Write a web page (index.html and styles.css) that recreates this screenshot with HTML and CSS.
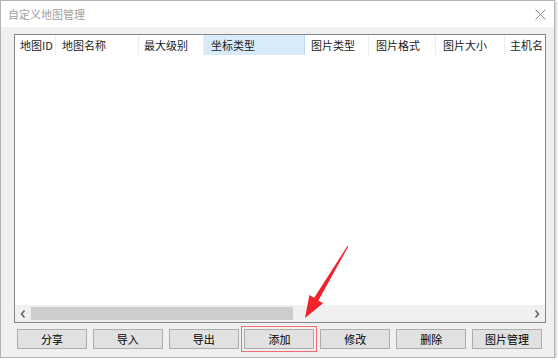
FILE: index.html
```html
<!DOCTYPE html>
<html>
<head>
    <title>自定义地图管理</title>
    <link rel="stylesheet" href="styles.css">
</head>
<body>
    <div class="window">
        <div class="titlebar">
            <span class="title">自定义地图管理</span>
            <svg class="close" width="11" height="11" viewBox="0 0 11 11">
                <path d="M0.5 0.5 L10.5 10.5 M10.5 0.5 L0.5 10.5" stroke="#8a8a8a" stroke-width="1" fill="none"/>
            </svg>
        </div>
        <div class="content">
            <div class="listview">
                <div class="header">
                    <div class="col c1">地图ID</div>
                    <div class="col c2">地图名称</div>
                    <div class="col c3">最大级别</div>
                    <div class="col c4 hover">坐标类型</div>
                    <div class="col c5">图片类型</div>
                    <div class="col c6">图片格式</div>
                    <div class="col c7">图片大小</div>
                    <div class="col c8">主机名</div>
                </div>
                <div class="rows"></div>
                <div class="hscroll">
                    <div class="arrow">
                        <svg width="6" height="8" viewBox="0 0 6 8"><path d="M4.5 0.5 L1.5 4 L4.5 7.5" stroke="#606060" stroke-width="1.5" fill="none"/></svg>
                    </div>
                    <div class="track">
                        <div class="thumb"></div>
                    </div>
                    <div class="arrow">
                        <svg width="6" height="8" viewBox="0 0 6 8"><path d="M1.5 0.5 L4.5 4 L1.5 7.5" stroke="#606060" stroke-width="1.5" fill="none"/></svg>
                    </div>
                </div>
            </div>
            <div class="buttons">
                <button>分享</button>
                <button>导入</button>
                <button>导出</button>
                <button class="marked">添加</button>
                <button>修改</button>
                <button>删除</button>
                <button>图片管理</button>
            </div>
        </div>
    </div>

    <!-- annotation arrow pointing at the add button -->
    <svg class="pointer" width="70" height="85" viewBox="0 0 70 85">
        <polygon points="58.4,5.3 28.4,59.4 33.1,62.2 15,77 19.4,54 24.2,56.8 57.6,4.7" fill="#f2222b"/>
    </svg>
</body>
</html>
```

FILE: styles.css
```css
body {
    margin: 0;
    padding: 0;
    background: #ffffff;
    font-family: "Noto Sans CJK SC", "Liberation Sans", sans-serif;
    font-size: 11px;
    color: #000;
}
.window {
    box-sizing: border-box;
    width: 555px;
    height: 358px;
    border: 1px solid #b4b4b4;
    box-shadow: 1px 1px 3px rgba(0, 0, 0, 0.25);
    display: flex;
    flex-direction: column;
    background: #f0f0f0;
}
.titlebar {
    height: 26px;
    background: #fff;
    display: flex;
    align-items: center;
    justify-content: space-between;
    padding: 0 8px 0 7px;
}
.title {
    color: #a0a0a0;
    font-size: 11px;
}
.close {
    margin-top: 1px;
}
.content {
    flex: 1;
    padding: 7px 8px 0 13px;
    display: flex;
    flex-direction: column;
}
.listview {
    box-sizing: border-box;
    height: 289px;
    border: 1px solid #828790;
    background: #fff;
    display: flex;
    flex-direction: column;
    overflow: hidden;
}
.header {
    display: flex;
    height: 20px;
    white-space: nowrap;
    color: #1a1a1a;
}
.col {
    flex: none;
    box-sizing: border-box;
    padding-left: 5px;
    line-height: 20px;
    border-right: 1px solid #ececec;
}
.c1 { width: 41px; }
.c2 { width: 83px; padding-left: 6px; }
.c3 { width: 65px; }
.c4 { width: 101px; padding-left: 7px; }
.c5 { width: 64px; padding-left: 6px; }
.c6 { width: 67px; padding-left: 7px; }
.c7 { width: 69px; padding-left: 7px; }
.c8 { width: 80px; border-right: none; }
.hover {
    background: #d9ebf9;
    border-right-color: #bcdcf4;
}
.rows {
    flex: 1;
}
.hscroll {
    height: 17px;
    display: flex;
    background: #f0f0f0;
}
.arrow {
    width: 16px;
    display: flex;
    align-items: center;
    justify-content: center;
}
.track {
    flex: 1;
    padding: 2px 0;
    box-sizing: border-box;
}
.thumb {
    width: 262px;
    height: 13px;
    background: #cdcdcd;
}
.buttons {
    display: flex;
    justify-content: space-between;
    margin: 6px 4px 0 3px;
}
button {
    width: 70px;
    height: 20px;
    padding: 0;
    border: 1px solid #adadad;
    background: #e1e1e1;
    font-family: "Noto Sans CJK SC", "Liberation Sans", sans-serif;
    font-size: 11px;
    color: #000;
}
.marked {
    outline: 1px solid #f26d6d;
    outline-offset: 2px;
}
.pointer {
    position: absolute;
    left: 290px;
    top: 241px;
}
```
